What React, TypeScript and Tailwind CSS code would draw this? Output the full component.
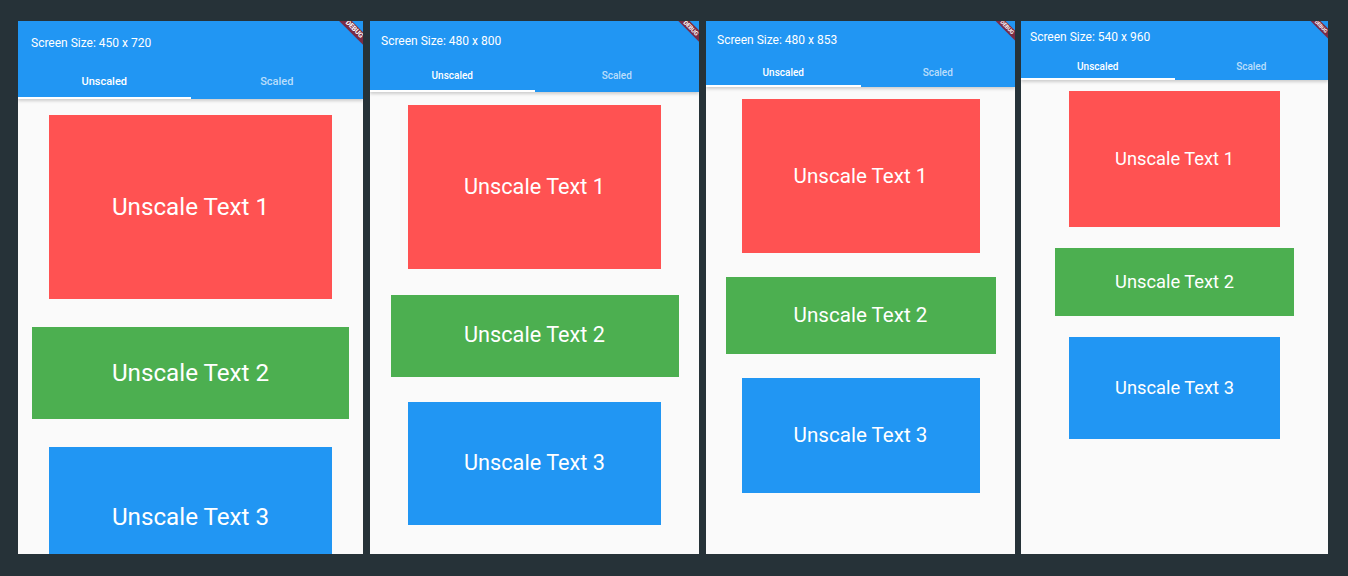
import React from 'react'

type Box = { color: string; size: string }

type ScreenProps = {
  title: string
  width: string
  bar: string
  titleRow: string
  tabRow: string
  body: string
  text: string
  banner: string
  boxes: Box[]
}

const screens: ScreenProps[] = [
  {
    title: 'Screen Size: 450 x 720',
    width: 'w-[345px]',
    bar: 'h-[78px]',
    titleRow: 'h-[44px] pl-[13px]',
    tabRow: 'text-[11px] pt-[3px]',
    body: 'pt-[16px] gap-[28px]',
    text: 'text-[24.2px]',
    banner: 'w-[64px] h-[9px] top-[4px] -right-[23px] text-[7px]',
    boxes: [
      { color: 'bg-[#ff5252]', size: 'w-[283px] h-[184px]' },
      { color: 'bg-[#4caf50]', size: 'w-[317px] h-[92px]' },
      { color: 'bg-[#2196f3]', size: 'w-[283px] h-[140px]' },
    ],
  },
  {
    title: 'Screen Size: 480 x 800',
    width: 'w-[329px] ml-[7px]',
    bar: 'h-[71px]',
    titleRow: 'h-[39px] pl-[11px]',
    tabRow: 'text-[10px]',
    body: 'pt-[13px] gap-[25.6px]',
    text: 'text-[21.7px]',
    banner: 'w-[56px] h-[8px] top-[3px] -right-[20px] text-[6px]',
    boxes: [
      { color: 'bg-[#ff5252]', size: 'w-[253px] h-[164px]' },
      { color: 'bg-[#4caf50]', size: 'w-[288px] h-[82px]' },
      { color: 'bg-[#2196f3]', size: 'w-[253px] h-[123px]' },
    ],
  },
  {
    title: 'Screen Size: 480 x 853',
    width: 'w-[309px] ml-[7px]',
    bar: 'h-[66px]',
    titleRow: 'h-[37px] pl-[11px]',
    tabRow: 'text-[10px] pt-[1px]',
    body: 'pt-[12px] gap-[24px]',
    text: 'text-[20.6px]',
    banner: 'w-[52px] h-[7px] top-[3px] -right-[18px] text-[5.5px]',
    boxes: [
      { color: 'bg-[#ff5252]', size: 'w-[238px] h-[154px]' },
      { color: 'bg-[#4caf50]', size: 'w-[270px] h-[77px]' },
      { color: 'bg-[#2196f3]', size: 'w-[238px] h-[115px]' },
    ],
  },
  {
    title: 'Screen Size: 540 x 960',
    width: 'w-[307px] ml-[6px]',
    bar: 'h-[59px]',
    titleRow: 'h-[31px] pl-[9px] pt-[1px]',
    tabRow: 'text-[10px] pt-[2px]',
    body: 'pt-[11px] gap-[21px]',
    text: 'text-[18.3px]',
    banner: 'w-[48px] h-[7px] top-[2px] -right-[17px] text-[5px]',
    boxes: [
      { color: 'bg-[#ff5252]', size: 'w-[211px] h-[136px]' },
      { color: 'bg-[#4caf50]', size: 'w-[239px] h-[68px]' },
      { color: 'bg-[#2196f3]', size: 'w-[211px] h-[102px]' },
    ],
  },
]

function Screen({ title, width, bar, titleRow, tabRow, body, text, banner, boxes }: ScreenProps) {
  return (
    <div className={`${width} h-[533px] shrink-0 relative overflow-hidden flex flex-col bg-[#fafafa]`}>
      {/* App bar with tabs */}
      <div className={`${bar} bg-[#2196f3] flex flex-col shrink-0 shadow-[0_2px_3px_rgba(0,0,0,0.18)] relative z-10`}>
        <div className={`${titleRow} flex items-center text-white text-[12px]`}>{title}</div>
        <div className={`flex-1 flex ${tabRow} font-medium`}>
          <div className="flex-1 flex flex-col">
            <div className="flex-1 flex items-center justify-center text-white">Unscaled</div>
            <div className="h-[2px] bg-white" />
          </div>
          <div className="flex-1 flex flex-col">
            <div className="flex-1 flex items-center justify-center text-white/70">Scaled</div>
            <div className="h-[2px]" />
          </div>
        </div>
      </div>

      {/* Body */}
      <div className={`flex-1 flex flex-col items-center ${body}`}>
        {boxes.map((b, i) => (
          <div
            key={i}
            className={`${b.size} ${b.color} shrink-0 flex items-center justify-center text-white ${text}`}
          >
            Unscale Text {i + 1}
          </div>
        ))}
      </div>

      {/* Debug banner */}
      <div
        className={`absolute ${banner} rotate-45 bg-[#7b2b44] z-20 flex items-center justify-center text-white font-bold leading-none tracking-tight`}
      >
        DEBUG
      </div>
    </div>
  )
}

export default function App() {
  return (
    <div className="w-[1348px] h-[576px] bg-[#263238] font-['Roboto',sans-serif] pt-[21px] pl-[18px] flex">
      {screens.map((s, i) => (
        <Screen key={i} {...s} />
      ))}
    </div>
  )
}
